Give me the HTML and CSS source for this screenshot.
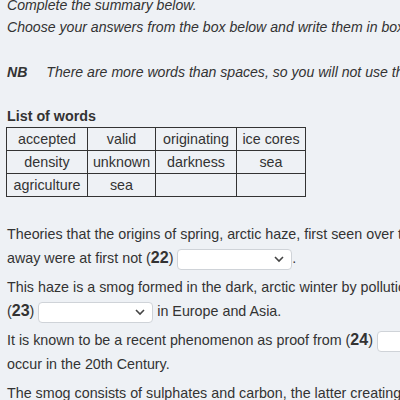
FILE: index.html
```html
<!DOCTYPE html>
<html>
<head>
<meta charset="utf-8">
<link rel="stylesheet" href="styles.css">
</head>
<body>
<div class="page">
  <p class="intro first">Complete the summary below.</p>
  <p class="intro">Choose your answers from the box below and write them in boxes 22–26 on your answer sheet.</p>
  <p class="intro nb"><b>NB</b><span class="nb-text">There are more words than spaces, so you will not use them all.</span></p>
  <h4 class="list-title">List of words</h4>
  <table class="words">
    <colgroup><col class="c1"><col class="c2"><col class="c3"><col class="c4"></colgroup>
    <tr><td>accepted</td><td>valid</td><td>originating</td><td>ice cores</td></tr>
    <tr><td>density</td><td>unknown</td><td>darkness</td><td>sea</td></tr>
    <tr><td>agriculture</td><td>sea</td><td></td><td></td></tr>
  </table>
  <p class="summary first-sum">Theories that the origins of spring, arctic haze, first seen over the Arctic in the 1950s, lay in places far<br>away were at first not (<b class="num">22</b>) <span class="select"><svg width="12" height="8" viewBox="0 0 12 8"><path d="M2 2 L6 6 L10 2" fill="none" stroke="#444" stroke-width="1.6"/></svg></span>.</p>
  <p class="summary">This haze is a smog formed in the dark, arctic winter by pollution from industry and<br>(<b class="num">23</b>) <span class="select"><svg width="12" height="8" viewBox="0 0 12 8"><path d="M2 2 L6 6 L10 2" fill="none" stroke="#444" stroke-width="1.6"/></svg></span> in Europe and Asia.</p>
  <p class="summary">It is known to be a recent phenomenon as proof from (<b class="num">24</b>) <span class="select"><svg width="12" height="8" viewBox="0 0 12 8"><path d="M2 2 L6 6 L10 2" fill="none" stroke="#444" stroke-width="1.6"/></svg></span> shows it did not<br>occur in the 20th Century.</p>
  <p class="summary">The smog consists of sulphates and carbon, the latter creating a haze over the region.</p>
</div>
</body>
</html>
```

FILE: styles.css
```css
html, body {
  margin: 0;
  padding: 0;
  background: #eef1f5;
  overflow: hidden;
}
.page {
  padding: 0 0 0 7px;
  width: 800px;
  font-family: "Liberation Sans", Arial, sans-serif;
  font-size: 14.3px;
  color: #333;
}
.intro {
  margin: 0;
  font-style: italic;
  font-size: 14.1px;
  line-height: 22px;
  white-space: nowrap;
}
.intro.first {
  margin-top: -6px;
}
.intro.nb {
  margin-top: 23px;
}
.nb-text {
  margin-left: 19px;
}
.list-title {
  margin: 22px 0 0;
  font-size: 14.3px;
  line-height: 22px;
  font-weight: bold;
}
.words {
  border-collapse: collapse;
  table-layout: fixed;
  width: 300px;
  margin-left: -1px;
}
.c1 { width: 81px; }
.c2 { width: 68px; }
.c3 { width: 81px; }
.c4 { width: 69px; }
.words td {
  border: 1px solid #333;
  height: 22px;
  padding: 0;
  line-height: 22px;
  text-align: center;
  white-space: nowrap;
}
.summary {
  margin: 5px 0 0;
  line-height: 24px;
  white-space: nowrap;
}
.summary.first-sum {
  margin-top: 25px;
}
.num {
  font-size: 16px;
}
.select {
  display: inline-flex;
  align-items: center;
  justify-content: flex-end;
  box-sizing: border-box;
  width: 115px;
  height: 21px;
  padding-right: 6px;
  vertical-align: middle;
  background: #fff;
  border: 1px solid #cfd3d8;
  border-radius: 4px;
}
```
